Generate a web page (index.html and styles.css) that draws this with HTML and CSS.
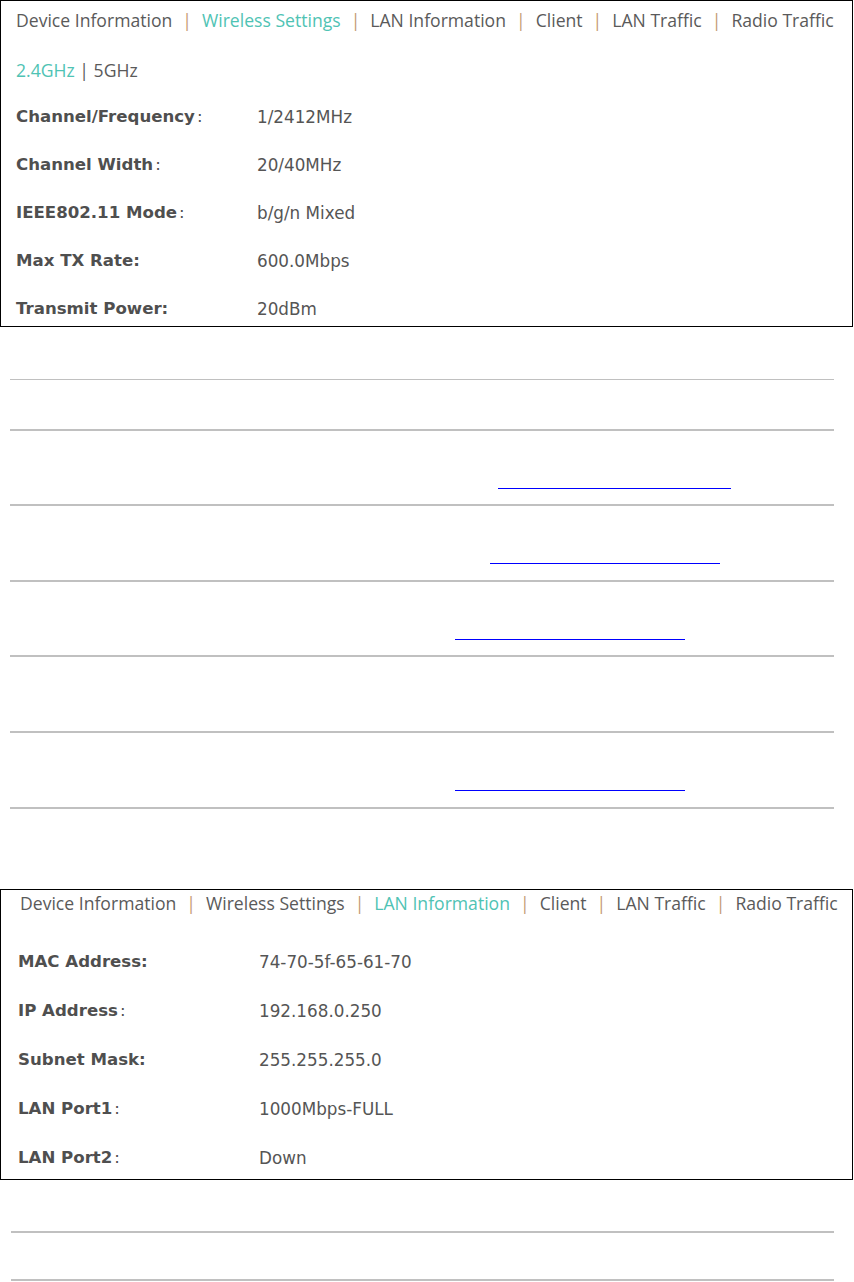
FILE: index.html
```html
<!DOCTYPE html>
<html>
<head>
  <meta charset="UTF-8">
  <title>Wireless Settings</title>
  <link rel="stylesheet" href="styles.css">
</head>
<body>
<div class="panel" id="wireless">
    <p class="tabs">
        <span class="tab">Device Information</span><span class="sep">|</span><span class="tab on">Wireless Settings</span><span class="sep">|</span><span class="tab">LAN Information</span><span class="sep">|</span><span class="tab">Client</span><span class="sep">|</span><span class="tab">LAN Traffic</span><span class="sep">|</span><span class="tab">Radio Traffic</span>
    </p>
    <p class="band"><span class="on">2.4GHz</span> | 5GHz</p>
    <div class="rows">
        <div class="row"><span class="label">Channel/Frequency<i>:</i></span><span class="value">1/2412MHz</span></div>
        <div class="row"><span class="label">Channel Width<i>:</i></span><span class="value">20/40MHz</span></div>
        <div class="row"><span class="label">IEEE802.11 Mode<i>:</i></span><span class="value">b/g/n Mixed</span></div>
        <div class="row"><span class="label">Max TX Rate:</span><span class="value">600.0Mbps</span></div>
        <div class="row"><span class="label">Transmit Power:</span><span class="value">20dBm</span></div>
    </div>
</div>

<div class="rules">
    <div class="rule first"></div>
    <div class="rule tight"><a class="ref r1" href="#"></a></div>
    <div class="rule"><a class="ref r2" href="#"></a></div>
    <div class="rule tight"><a class="ref r3" href="#"></a></div>
    <div class="rule"></div>
    <div class="rule"><a class="ref r3" href="#"></a></div>
    <div class="rule end"></div>
</div>

<div class="panel" id="lan">
    <p class="tabs">
        <span class="tab">Device Information</span><span class="sep">|</span><span class="tab">Wireless Settings</span><span class="sep">|</span><span class="tab on">LAN Information</span><span class="sep">|</span><span class="tab">Client</span><span class="sep">|</span><span class="tab">LAN Traffic</span><span class="sep">|</span><span class="tab">Radio Traffic</span>
    </p>
    <div class="rows">
        <div class="row"><span class="label">MAC Address:</span><span class="value">74-70-5f-65-61-70</span></div>
        <div class="row"><span class="label">IP Address<i>:</i></span><span class="value">192.168.0.250</span></div>
        <div class="row"><span class="label">Subnet Mask:</span><span class="value">255.255.255.0</span></div>
        <div class="row"><span class="label">LAN Port1<i>:</i></span><span class="value">1000Mbps-FULL</span></div>
        <div class="row"><span class="label">LAN Port2<i>:</i></span><span class="value">Down</span></div>
    </div>
</div>

<div class="rules bottom">
    <div class="rule short"></div>
    <div class="rule end"></div>
</div>
</body>
</html>
```

FILE: styles.css
```css
* {
    margin: 0;
    padding: 0;
}
body {
    background-color: #FFF;
    width: 854px;
    font-family: 'DejaVu Sans', Verdana, sans-serif;
    color: #555;
}
.panel {
    border: 1px solid #000;
    margin-right: 1px;
}
#wireless {
    padding: 7px 0 5px 15px;
}
#lan {
    margin-top: 80px;
    padding: 1px 0 9px 17px;
}
.tabs, .band {
    font-family: 'Open Sans', sans-serif;
    font-size: 17.6px;
    line-height: 24px;
    height: 24px;
    color: #5a5a5a;
    white-space: nowrap;
}
#lan .tabs {
    padding-left: 2px;
}
.tabs .sep {
    color: #c49a72;
    margin: 0 10px;
}
.on {
    color: #4fc3b4;
}
.band {
    margin-top: 26px;
}
.rows {
    display: flex;
    flex-direction: column;
    gap: 24px;
    margin-top: 23px;
}
#lan .rows {
    gap: 25px;
    margin-top: 35px;
}
.row {
    display: flex;
    height: 24px;
    line-height: 24px;
}
.label {
    width: 241px;
    font-size: 16.6px;
    font-weight: bold;
    color: #4f4f4f;
}
.label i {
    font-style: normal;
    font-weight: normal;
    margin-left: 2px;
}
.value {
    font-size: 16.8px;
    color: #555;
}
.rules {
    margin: 52px 20px 0 10px;
}
.rule {
    height: 74px;
    border-top: 2px solid #c0c0c0;
}
.rule.first {
    height: 49px;
    border-top-width: 1px;
}
.rule.tight {
    height: 73px;
}
.rule.end {
    height: 0;
}
.rules.bottom {
    margin: 51px 20px 0 11px;
}
.rule.short {
    height: 46px;
}
.ref {
    display: block;
    height: 1px;
    margin-top: 57px;
    background-color: #00f;
}
.r1 {
    margin-left: 488px;
    width: 233px;
}
.r2 {
    margin-left: 480px;
    width: 230px;
}
.r3 {
    margin-left: 445px;
    width: 230px;
}
```
